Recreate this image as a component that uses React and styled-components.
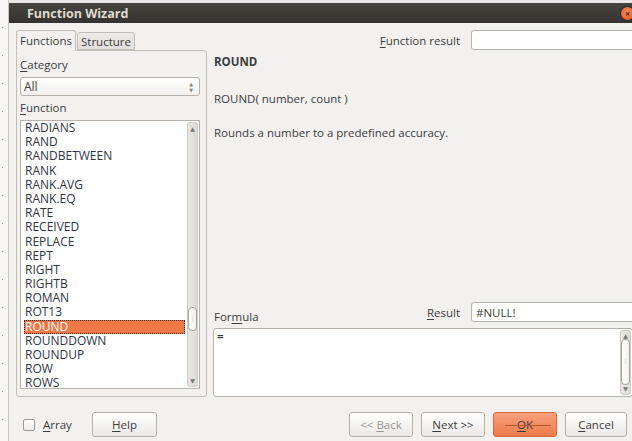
import React from 'react';
import styled, { createGlobalStyle } from 'styled-components';

const GlobalStyle = createGlobalStyle`
  html, body {
    margin: 0;
    padding: 0;
    overflow: hidden;
    background: #f7f7f6;
  }
  body {
    font-family: "Open Sans", "DejaVu Sans", sans-serif;
    font-size: 11.5px;
    color: #3c3c3c;
  }
`;

// スタイルコンポーネント
const Screen = styled.div`
  width: 632px;
  height: 441px;
  display: flex;
  overflow: hidden;
  background: #e9e8e6;
`;

const BackWindow = styled.div`
  width: 9px;
  flex-shrink: 0;
  background:
    repeating-linear-gradient(180deg, transparent 0 27px, #9a9894 27px 28px) 2px 0 / 1px 100% no-repeat,
    #f6f6f5;
  border-right: 1px solid #c9c6c1;
  box-sizing: border-box;
`;

const Dialog = styled.div`
  width: 631px;
  flex-shrink: 0;
  margin-top: 3px;
  display: flex;
  flex-direction: column;
  background: #f2f1f0;
`;

const TitleBar = styled.div`
  height: 20px;
  display: flex;
  align-items: center;
  justify-content: space-between;
  padding: 0 6px 0 18px;
  background: linear-gradient(#45443f, #34332f);
  color: #dfdbd2;
  font-weight: 700;
  font-size: 12.5px;
`;

const CloseButton = styled.div`
  width: 13px;
  height: 13px;
  border-radius: 50%;
  background: radial-gradient(circle at 45% 40%, #f58a5c, #d9531e);
  box-shadow: 0 0 0 1px #2b2a27;
  display: flex;
  align-items: center;
  justify-content: center;
  color: #5a2410;
  font-size: 9px;
  line-height: 1;
`;

const Body = styled.div`
  flex: 1;
  display: flex;
  flex-direction: column;
  padding: 7px 0 0 7px;
`;

const Main = styled.div`
  display: flex;
  height: 367px;
`;

const LeftPane = styled.div`
  width: 191px;
  display: flex;
  flex-direction: column;
`;

const TabBar = styled.div`
  display: flex;
  align-items: flex-end;
  height: 20px;
  position: relative;
  z-index: 1;
`;

const Tab = styled.div`
  height: ${p => (p.$active ? '21px' : '18px')};
  box-sizing: border-box;
  padding: 0 3px;
  display: flex;
  align-items: center;
  border: 1px solid #c2bdb7;
  border-bottom: ${p => (p.$active ? '1px solid #f2f1f0' : '1px solid #c2bdb7')};
  border-radius: 3px 3px 0 0;
  background: ${p => (p.$active ? '#f2f1f0' : 'linear-gradient(#ecebe9, #e2e0dd)')};
  margin-bottom: ${p => (p.$active ? '-1px' : '0')};
  margin-right: 1px;
`;

const TabPanel = styled.div`
  flex: 1;
  border: 1px solid #c2bdb7;
  border-radius: 0 3px 3px 3px;
  padding: 6px 6px 7px 3px;
  display: flex;
  flex-direction: column;
`;

const FieldLabel = styled.div`
  height: 16px;
  line-height: 16px;
  margin-top: ${p => p.$gap || 0}px;
`;

const Mnemonic = styled.span`
  text-decoration: underline;
  text-underline-offset: 2px;
`;

const ComboBox = styled.div`
  margin-top: 4px;
  height: 19px;
  box-sizing: border-box;
  border: 1px solid #b6b1ab;
  border-radius: 3px;
  background: linear-gradient(#ffffff, #f1f0ee);
  display: flex;
  align-items: center;
  justify-content: space-between;
  padding: 0 6px 0 3px;
  font-size: 12px;
`;

const Spinner = styled.span`
  display: flex;
  flex-direction: column;
  align-items: center;
  gap: 2px;
  color: #8a8884;
  font-size: 5px;
  line-height: 4px;
`;

const ListBox = styled.div`
  margin-top: 4px;
  height: 269px;
  box-sizing: border-box;
  border: 1px solid #b6b1ab;
  background: #ffffff;
  display: flex;
  overflow: hidden;
`;

const Rows = styled.div`
  flex: 1;
  padding: 0 2px 0 3px;
  color: #2f3443;
  font-size: 12px;
`;

const Row = styled.div`
  height: 14.2px;
  line-height: 14.2px;
  padding-left: 1px;
  box-sizing: border-box;
  white-space: nowrap;
  background: ${p => (p.$selected ? '#f07746' : 'transparent')};
  color: ${p => (p.$selected ? '#ffffff' : 'inherit')};
  outline: ${p => (p.$selected ? '1px dotted #3a2a20' : 'none')};
  outline-offset: -1px;
`;

const ScrollTrack = styled.div`
  width: 11px;
  margin: 1px 1px 1px 0;
  border: 1px solid #cfcbc6;
  border-radius: 3px;
  background: linear-gradient(90deg, #e8e6e3, #dedbd7);
  display: flex;
  flex-direction: column;
  align-items: center;
  box-sizing: border-box;
`;

const Arrow = styled.div`
  height: 11px;
  display: flex;
  align-items: center;
  justify-content: center;
  color: #77736e;
  font-size: 6px;
`;

const Thumb = styled.div`
  width: 9px;
  margin-top: ${p => p.$top}px;
  height: ${p => p.$height}px;
  border: 1px solid #aaa59f;
  border-radius: 4px;
  background: linear-gradient(90deg, #ffffff, #f0eeeb);
  box-sizing: border-box;
  display: flex;
  align-items: center;
  justify-content: center;
  color: #a8a39d;
  font-size: 6px;
  line-height: 3px;
  flex-shrink: 0;
`;

const TrackFill = styled.div`
  flex: 1;
`;

const RightPane = styled.div`
  flex: 1;
  margin-left: 6px;
  display: flex;
  flex-direction: column;
`;

const ResultRow = styled.div`
  height: 20px;
  display: flex;
  align-items: center;
  justify-content: flex-end;
  gap: 11px;
  margin-right: -8px;
`;

const TextInput = styled.div`
  width: ${p => p.$width}px;
  height: ${p => p.$height || 20}px;
  box-sizing: border-box;
  border: 1px solid #b6b1ab;
  border-radius: 3px;
  background: #ffffff;
  display: flex;
  align-items: center;
  padding-left: 4px;
  font-size: 11.5px;
`;

const Description = styled.div`
  padding-left: 1px;
  display: flex;
  flex-direction: column;
  flex: 1;
`;

const FunctionName = styled.div`
  font-weight: 700;
  margin-top: 4px;
  line-height: 16px;
`;

const DescLine = styled.div`
  line-height: 16px;
  margin-top: ${p => p.$gap}px;
`;

const FormulaHeader = styled.div`
  display: flex;
  align-items: flex-start;
  justify-content: space-between;
  height: 26px;
  margin-right: -8px;
`;

const FormulaLabel = styled.div`
  margin-top: 7px;
  padding-left: 1px;
  line-height: 16px;
`;

const ResultGroup = styled.div`
  display: flex;
  align-items: center;
  gap: 11px;
`;

const FormulaBox = styled.div`
  height: 69px;
  box-sizing: border-box;
  border: 1px solid #b6b1ab;
  border-radius: 3px;
  background: #ffffff;
  display: flex;
  margin-right: 7px;
`;

const FormulaText = styled.div`
  flex: 1;
  padding: 1px 3px;
  line-height: 14px;
  font-weight: 700;
`;

const Footer = styled.div`
  display: flex;
  align-items: center;
  height: 25px;
  margin-top: 15px;
  padding-left: 7px;
`;

const CheckBox = styled.div`
  width: 12px;
  height: 12px;
  box-sizing: border-box;
  border: 1px solid #9d9892;
  border-radius: 2px;
  background: linear-gradient(#ffffff, #ecebe9);
`;

const CheckLabel = styled.div`
  margin-left: 8px;
  width: 49px;
`;

const Button = styled.div`
  width: ${p => p.$width || 64}px;
  height: 25px;
  box-sizing: border-box;
  border: 1px solid ${p => (p.$primary ? '#d8693d' : '#b3aea8')};
  border-radius: 3px;
  background: ${p =>
    p.$primary
      ? 'linear-gradient(#f7a17d, #ee7a4b)'
      : 'linear-gradient(#ffffff, #ebe9e7)'};
  color: ${p => (p.$disabled ? '#9a9792' : '#3c3c3c')};
  display: flex;
  align-items: center;
  justify-content: center;
  white-space: pre;
  position: relative;
  margin-left: ${p => p.$gap || 0}px;
`;

const FocusLine = styled.span`
  position: absolute;
  left: 11px;
  right: 5px;
  top: 12px;
  height: 1px;
  background: #b8582c;
`;

const Spacer = styled.div`
  flex: 1;
`;

const functions = [
  'RADIANS', 'RAND', 'RANDBETWEEN', 'RANK', 'RANK.AVG', 'RANK.EQ', 'RATE',
  'RECEIVED', 'REPLACE', 'REPT', 'RIGHT', 'RIGHTB', 'ROMAN', 'ROT13',
  'ROUND', 'ROUNDDOWN', 'ROUNDUP', 'ROW', 'ROWS',
];

const App = () => {
  return (
    <>
      <GlobalStyle />
      <Screen>
        <BackWindow />
        <Dialog>
          <TitleBar>
            <span>Function Wizard</span>
            <CloseButton>×</CloseButton>
          </TitleBar>
          <Body>
            <Main>
              <LeftPane>
                <TabBar>
                  <Tab $active>Functions</Tab>
                  <Tab>Structure</Tab>
                </TabBar>
                <TabPanel>
                  <FieldLabel><Mnemonic>C</Mnemonic>ategory</FieldLabel>
                  <ComboBox>
                    <span>All</span>
                    <Spinner><span>▲</span><span>▼</span></Spinner>
                  </ComboBox>
                  <FieldLabel $gap={4}><Mnemonic>F</Mnemonic>unction</FieldLabel>
                  <ListBox>
                    <Rows>
                      {functions.map(name => (
                        <Row key={name} $selected={name === 'ROUND'}>{name}</Row>
                      ))}
                    </Rows>
                    <ScrollTrack>
                      <Arrow>▲</Arrow>
                      <Thumb $top={173} $height={24}>⋮</Thumb>
                      <TrackFill />
                      <Arrow>▼</Arrow>
                    </ScrollTrack>
                  </ListBox>
                </TabPanel>
              </LeftPane>

              <RightPane>
                <ResultRow>
                  <span><Mnemonic>F</Mnemonic>unction result</span>
                  <TextInput $width={177} />
                </ResultRow>
                <Description>
                  <FunctionName>ROUND</FunctionName>
                  <DescLine $gap={21}>ROUND( number, count )</DescLine>
                  <DescLine $gap={18}>Rounds a number to a predefined accuracy.</DescLine>
                </Description>
                <FormulaHeader>
                  <FormulaLabel>For<Mnemonic>m</Mnemonic>ula</FormulaLabel>
                  <ResultGroup>
                    <span><Mnemonic>R</Mnemonic>esult</span>
                    <TextInput $width={177} $height={20}>#NULL!</TextInput>
                  </ResultGroup>
                </FormulaHeader>
                <FormulaBox>
                  <FormulaText>=</FormulaText>
                  <ScrollTrack>
                    <Arrow>▲</Arrow>
                    <Thumb $top={-2} $height={46}>⋮</Thumb>
                    <TrackFill />
                    <Arrow>▼</Arrow>
                  </ScrollTrack>
                </FormulaBox>
              </RightPane>
            </Main>

            <Footer>
              <CheckBox />
              <CheckLabel><Mnemonic>A</Mnemonic>rray</CheckLabel>
              <Button $width={65}><Mnemonic>H</Mnemonic>elp</Button>
              <Spacer />
              <Button $disabled>{'<< '}<Mnemonic>B</Mnemonic>ack</Button>
              <Button $gap={8}><Mnemonic>N</Mnemonic>{'ext >>'}</Button>
              <Button $gap={8} $primary>
                <FocusLine />
                <Mnemonic>O</Mnemonic>K
              </Button>
              <Button $gap={8} $width={62}><Mnemonic>C</Mnemonic>ancel</Button>
              <div style={{ width: 13, flexShrink: 0 }} />
            </Footer>
          </Body>
        </Dialog>
      </Screen>
    </>
  );
};

export default App;
